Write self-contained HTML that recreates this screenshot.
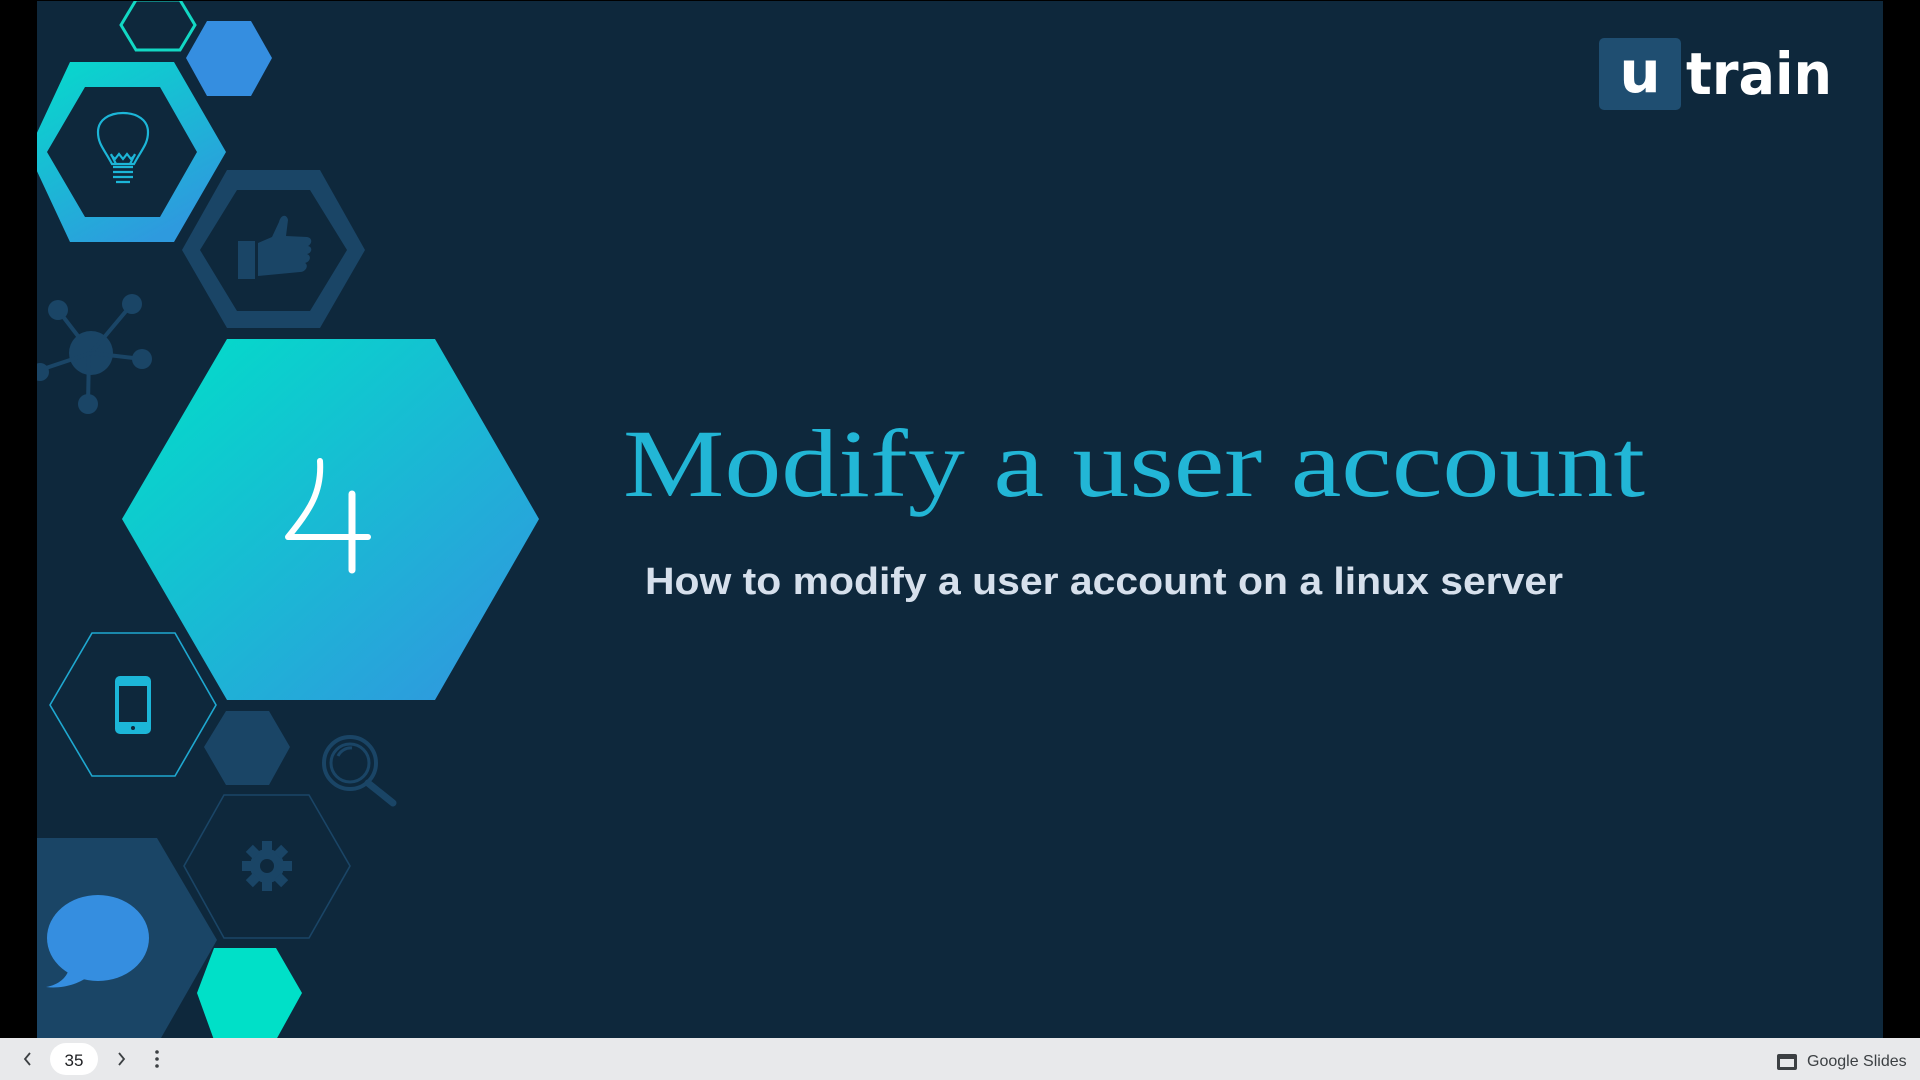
<!DOCTYPE html>
<html><head><meta charset="utf-8"><style>
html,body{margin:0;padding:0;width:1920px;height:1080px;overflow:hidden;background:#000}
svg{display:block}
</style></head><body>
<svg width="1920" height="1080" viewBox="0 0 1920 1080" xmlns="http://www.w3.org/2000/svg">
<defs>
<linearGradient id="g1" x1="0" y1="0" x2="1" y2="1">
<stop offset="0" stop-color="#00e0c8"/><stop offset="1" stop-color="#3393e0"/>
</linearGradient>
<linearGradient id="g2" x1="0" y1="0" x2="0.6" y2="1">
<stop offset="0" stop-color="#05dccb"/><stop offset="1" stop-color="#2e9ade"/>
</linearGradient>
<clipPath id="slide"><rect x="37" y="1" width="1846" height="1037"/></clipPath>
</defs>
<rect x="0" y="0" width="1920" height="1080" fill="#000"/>
<rect x="37" y="1" width="1846" height="1037" fill="#0e283c"/>
<g clip-path="url(#slide)">
<polygon points="121,25 136,0 180,0 195,25 180,50 136,50" fill="none" stroke="#12d8c4" stroke-width="3"/>
<polygon points="186,58 207,21 251,21 272,58 251,96 207,96" fill="#358ee0"/>
<path d="M28,152 L70,62 L174,62 L226,152 L174,242 L70,242 Z M47,152 L85,87 L160,87 L197,152 L160,217 L85,217 Z" fill="url(#g2)" fill-rule="evenodd"/>
<g fill="none" stroke="#1cb6d8" stroke-width="2.2" transform="translate(0,14)">
<path d="M112,150 C104,135 98,130 98,118 C98,106 109,99 123,99 C137,99 148,106 148,118 C148,130 142,135 134,150 Z"/>
<path d="M111,140 L116,150 M135,140 L130,150 M111,141 L115,145 L119,140 L123,145 L127,140 L131,145 L135,141"/>
<path d="M113,153 H133 M113,158 H133 M113,163 H133 M116,168 H130"/>
</g>
<path d="M182,250 L227,170 L320,170 L365,250 L320,328 L227,328 Z M200,250 L237,190 L310,190 L347,250 L310,311 L237,311 Z" fill="#1a4566" fill-rule="evenodd"/>
<g fill="#1a4566">
<rect x="238" y="241" width="17" height="38"/>
<path d="M258,243 L272,237 L279,222 C281,214 287,214 288,220 L286,236 L307,237 C313,238 312,244 308,246 C313,247 312,253 307,254 C312,256 310,262 305,263 C309,265 306,272 300,272 L258,276 Z"/>
</g>
<g fill="#1a4566" stroke="#1a4566" stroke-width="4">
<circle cx="91" cy="353" r="22" stroke="none"/>
<line x1="91" y1="353" x2="58" y2="310"/><circle cx="58" cy="310" r="10" stroke="none"/>
<line x1="91" y1="353" x2="132" y2="304"/><circle cx="132" cy="304" r="10" stroke="none"/>
<line x1="91" y1="353" x2="142" y2="359"/><circle cx="142" cy="359" r="10" stroke="none"/>
<line x1="89" y1="353" x2="88" y2="404"/><circle cx="88" cy="404" r="10" stroke="none"/>
<line x1="91" y1="353" x2="40" y2="370"/><circle cx="40" cy="372" r="9" stroke="none"/>
</g>
<polygon points="122,519 227,339 435,339 539,519 435,700 227,700" fill="url(#g1)"/>
<path d="M320,461 C322,492 310,510 288,537 L368,537" fill="none" stroke="#fff" stroke-width="6" stroke-linecap="round" stroke-linejoin="round"/>
<line x1="352" y1="494" x2="352" y2="570" stroke="#fff" stroke-width="7" stroke-linecap="round"/>
<polygon points="50,705 92,633 175,633 216,705 175,776 92,776" fill="none" stroke="#1fa8d0" stroke-width="1.6"/>
<rect x="117" y="678" width="32" height="54" rx="3" fill="none" stroke="#1cb6d8" stroke-width="4"/>
<rect x="117" y="678" width="32" height="8" fill="#1cb6d8"/><rect x="117" y="722" width="32" height="10" fill="#1cb6d8"/>
<circle cx="133" cy="728" r="2" fill="#0e283c"/>
<polygon points="204,747 226,711 269,711 290,747 269,785 226,785" fill="#1a4566"/>
<g fill="none" stroke="#1a4566">
<circle cx="350" cy="763" r="26" stroke-width="4"/>
<circle cx="350" cy="763" r="19" stroke-width="3"/>
<path d="M338,756 A14,14 0 0 1 352,748" stroke-width="3"/>
<path d="M368,783 L393,803" stroke-width="7" stroke-linecap="round"/>
</g>
<polygon points="184,866 224,795 309,795 350,866 309,938 224,938" fill="none" stroke="#1a4566" stroke-width="1.6"/>
<g transform="translate(267,866)" fill="#1a4566">
<circle r="17"/>
<g><rect x="-5" y="-25" width="10" height="10"/><rect x="-5" y="15" width="10" height="10"/><rect x="-25" y="-5" width="10" height="10"/><rect x="15" y="-5" width="10" height="10"/></g>
<g transform="rotate(45)"><rect x="-5" y="-25" width="10" height="10"/><rect x="-5" y="15" width="10" height="10"/><rect x="-25" y="-5" width="10" height="10"/><rect x="15" y="-5" width="10" height="10"/></g>
<circle r="7" fill="#0e283c"/>
</g>
<polygon points="37,838 157,838 217,940 157,1045 37,1045" fill="#1a4566"/>
<ellipse cx="98" cy="938" rx="51" ry="43" fill="#358ee0"/>
<path d="M70,965 C68,978 58,985 46,987 C62,989 80,984 90,975 Z" fill="#358ee0"/>
<polygon points="197,993 214,948 276,948 302,993 276,1040 214,1040" fill="#00e0c8"/>
</g>
<text x="623" y="496" textLength="1022" lengthAdjust="spacingAndGlyphs" font-family="Liberation Serif, serif" font-size="96" fill="#22b6d6">Modify a user account</text>
<text x="645" y="594" textLength="918" lengthAdjust="spacingAndGlyphs" font-family="Liberation Sans, sans-serif" font-size="38" font-weight="bold" fill="#d6e0ec">How to modify a user account on a linux server</text>
<rect x="1599" y="38" width="82" height="72" rx="5" fill="#1f4e71"/>
<text x="1640" y="92" text-anchor="middle" font-family="DejaVu Sans, sans-serif" font-weight="bold" font-size="58" fill="#fff">u</text>
<text x="1686" y="94" textLength="146" lengthAdjust="spacingAndGlyphs" font-family="DejaVu Sans, sans-serif" font-weight="bold" font-size="58" fill="#fff">train</text>
<rect x="0" y="1038" width="1920" height="42" fill="#e8e9eb"/>
<path d="M30,1053 L25,1059 L30,1065" fill="none" stroke="#3c4043" stroke-width="1.8"/>
<rect x="50" y="1043" width="48" height="32" rx="16" fill="#fff"/>
<text x="74" y="1066" text-anchor="middle" font-family="Liberation Sans, sans-serif" font-size="17" fill="#202124">35</text>
<path d="M119,1053 L124,1059 L119,1065" fill="none" stroke="#3c4043" stroke-width="1.8"/>
<circle cx="157" cy="1052" r="1.8" fill="#3c4043"/><circle cx="157" cy="1059" r="1.8" fill="#3c4043"/><circle cx="157" cy="1066" r="1.8" fill="#3c4043"/>
<rect x="1777" y="1054" width="20" height="16" rx="2" fill="#3c4043"/>
<rect x="1780" y="1059" width="14" height="8" fill="#e8e9eb"/>
<text x="1807" y="1066" font-family="Liberation Sans, sans-serif" font-size="16" fill="#3c4043">Google Slides</text>
</svg>
</body></html>
